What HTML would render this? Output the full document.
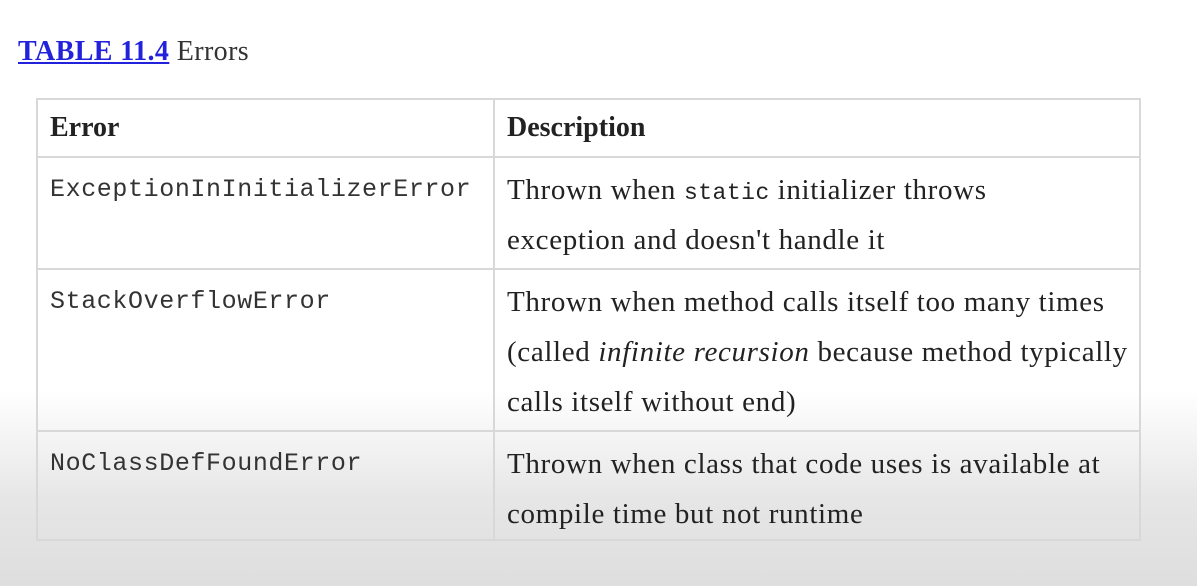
<!DOCTYPE html>
<html><head><style>
html,body{margin:0;padding:0}
body{width:1197px;height:586px;overflow:hidden;background:linear-gradient(to bottom,#fff 0,#fff 390px,#e6e6e6 500px,#dedede 586px);font-family:"Liberation Serif",serif;color:#222;position:relative}
.title{position:absolute;left:18px;top:36px;font-size:28px;color:#333;letter-spacing:0.4px}
.title a{color:#2222dd;font-weight:bold;text-decoration:underline}
table{position:absolute;left:36px;top:98px;width:1105px;border-collapse:collapse;border:2px solid #d4d4d4;table-layout:fixed}
td{border:2px solid #d8d8d8;vertical-align:top;padding:7px 12px 0 12px;font-size:29px;line-height:50px;letter-spacing:0.65px;white-space:nowrap;overflow:hidden}
td.m{font-family:"Liberation Mono",monospace;font-size:25px;letter-spacing:0.6px;color:#333;padding-top:7px}
code{font-family:"Liberation Mono",monospace;font-size:23px;letter-spacing:0.5px;line-height:0}
th{border:2px solid #d8d8d8;text-align:left;font-size:28px;padding:0 12px;height:56px}
tr.r1 td{height:103px}
tr.r2 td{height:153px}
tr.r3 td{height:100px}
</style></head><body>
<div class="title"><a>TABLE 11.4</a> Errors</div>
<table>
<colgroup><col style="width:457px"><col></colgroup>
<tr><th>Error</th><th>Description</th></tr>
<tr class="r1"><td class="m">ExceptionInInitializerError</td><td>Thrown when <code>static</code> initializer throws<br>exception and doesn't handle it</td></tr>
<tr class="r2"><td class="m">StackOverflowError</td><td>Thrown when method calls itself too many times<br>(called <i>infinite recursion</i> because method typically<br>calls itself without end)</td></tr>
<tr class="r3"><td class="m">NoClassDefFoundError</td><td>Thrown when class that code uses is available at<br>compile time but not runtime</td></tr>
</table>
</body></html>
